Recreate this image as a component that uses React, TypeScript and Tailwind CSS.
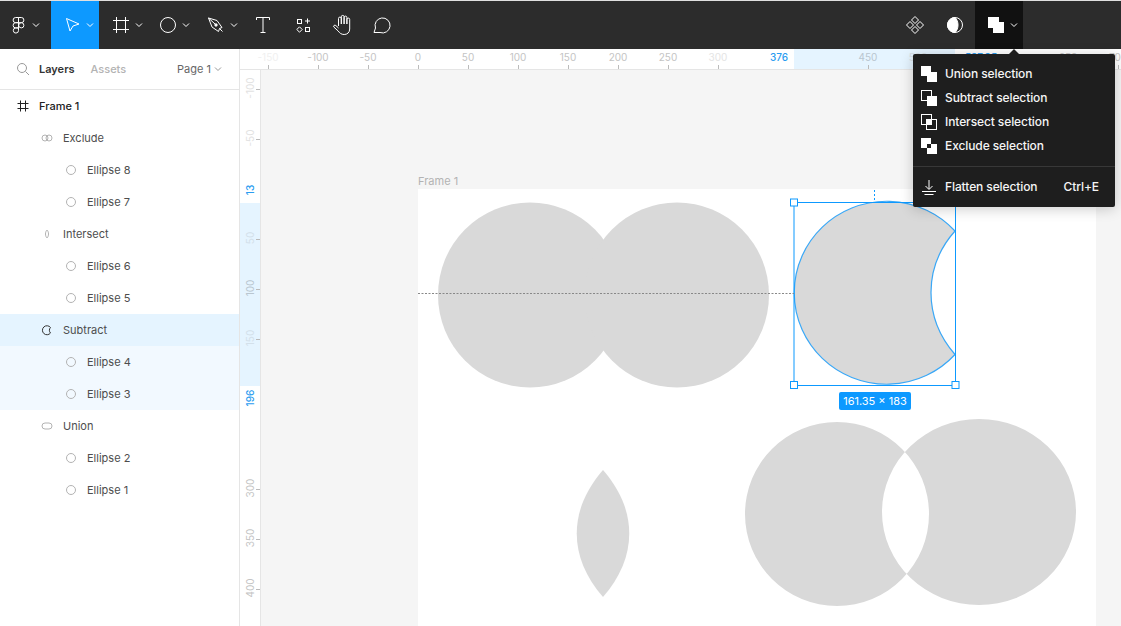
import React from "react";

const Chevron = ({ className = "text-white" }: { className?: string }) => (
  <svg width="8" height="8" viewBox="0 0 8 8" fill="none" stroke="currentColor" className={className}>
    <path d="M1 2.5 4 5.5 7 2.5" />
  </svg>
);

const Icon = ({ children }: { children: React.ReactNode }) => (
  <svg width="24" height="24" viewBox="0 0 24 24" fill="none" stroke="white" strokeWidth="1">
    {children}
  </svg>
);

const tools: { w: string; chevron?: boolean; icon: React.ReactNode }[] = [
  {
    w: "w-[51px] pl-[6px]",
    chevron: true,
    icon: (
      <>
        <path d="M12.5 4.5H9.7a2.6 2.6 0 0 0 0 5.2h2.8z" />
        <path d="M12.5 4.5h2.8a2.6 2.6 0 0 1 0 5.2h-2.8z" />
        <path d="M12.5 9.7H9.7a2.6 2.6 0 0 0 0 5.2h2.8z" />
        <circle cx="15.3" cy="12.3" r="2.6" />
        <path d="M12.5 14.9H9.7a2.6 2.6 0 1 0 2.8 2.6z" />
      </>
    ),
  },
  {
    w: "w-[48px] pl-[9px] bg-[#0d99ff]",
    chevron: true,
    icon: <path d="M6.5 5.5 19 11 13 13 10 18z" />,
  },
  {
    w: "w-[48px] pl-[10px]",
    chevron: true,
    icon: <path d="M7.5 4v16M16.5 4v16M4 7.5h16M4 16.5h16" />,
  },
  { w: "w-[48px] pl-[9px]", chevron: true, icon: <circle cx="12" cy="12" r="7.5" /> },
  {
    w: "w-[48px] pl-[9px]",
    chevron: true,
    icon: (
      <>
        <path d="M4.5 5 13 7.5 18 14.5 15.5 15.5 14.5 18.5 8 14 4.5 5z" />
        <circle cx="12" cy="12" r="1.2" fill="white" />
        <path d="M4.5 5 11 11M15.5 15.5 18.5 18.5" />
      </>
    ),
  },
  {
    w: "w-[40px] pl-[8px]",
    icon: <path d="M5.5 7V4.5h13V7M12 4.5v15M9.5 19.5h5" />,
  },
  {
    w: "w-[40px] pl-[8px]",
    icon: (
      <>
        <rect x="6.5" y="6.5" width="4" height="4" />
        <rect x="14.5" y="14.5" width="4" height="4" />
        <path d="M16.5 5.5v5M14 8h5" />
        <path d="M8.5 13.8 11.2 16.5 8.5 19.2 5.8 16.5z" />
      </>
    ),
  },
  {
    w: "w-[40px] pl-[8px]",
    icon: (
      <path d="M7.5 13V5.5a1.4 1.4 0 0 1 2.8 0V11M10.3 11V3.8a1.4 1.4 0 0 1 2.8 0V11M13.1 11V4.5a1.4 1.4 0 0 1 2.8 0V11M15.9 11V6.5a1.4 1.4 0 0 1 2.8 0V16c0 3.5-2.5 5.5-5.5 5.5-3 0-4.5-1.5-6-3.5L2.8 14c-.8-1.200.8-2.400 2-1.500L7.500 15" />
    ),
  },
  {
    w: "w-[40px] pl-[8px]",
    icon: <path d="M3 19.5 4.5 15A7.5 7.5 0 1 1 9 19.5z" />,
  },
];

type BoolKind = "union" | "subtract" | "intersect" | "exclude";

const BoolIcon = ({ kind }: { kind: BoolKind }) => {
  const bg = "#1e1e1e";
  return (
    <svg width="16" height="16" viewBox="0 0 16 16" className="shrink-0">
      {kind === "union" && <path d="M0 0h10v6h6v10H6v-6H0z" fill="white" />}
      {kind === "subtract" && (
        <>
          <rect x="0.5" y="0.5" width="10" height="10" fill="none" stroke="white" />
          <rect x="6" y="6" width="10" height="10" fill="white" />
        </>
      )}
      {kind === "intersect" && (
        <>
          <rect x="0.5" y="0.5" width="10" height="10" fill="none" stroke="white" />
          <rect x="5.5" y="5.5" width="10" height="10" fill="none" stroke="white" />
          <rect x="6" y="6" width="5" height="5" fill="white" />
        </>
      )}
      {kind === "exclude" && (
        <>
          <rect x="0" y="0" width="10" height="10" fill="white" />
          <rect x="6" y="6" width="10" height="10" fill="white" />
          <rect x="6" y="6" width="4" height="4" fill={bg} />
        </>
      )}
    </svg>
  );
};

const layers: { name: string; depth: number; kind: string; row?: string }[] = [
  { name: "Frame 1", depth: 0, kind: "frame" },
  { name: "Exclude", depth: 1, kind: "exclude" },
  { name: "Ellipse 8", depth: 2, kind: "ellipse" },
  { name: "Ellipse 7", depth: 2, kind: "ellipse" },
  { name: "Intersect", depth: 1, kind: "intersect" },
  { name: "Ellipse 6", depth: 2, kind: "ellipse" },
  { name: "Ellipse 5", depth: 2, kind: "ellipse" },
  { name: "Subtract", depth: 1, kind: "subtract", row: "bg-[#e5f4ff]" },
  { name: "Ellipse 4", depth: 2, kind: "ellipse", row: "bg-[#f2f9ff]" },
  { name: "Ellipse 3", depth: 2, kind: "ellipse", row: "bg-[#f2f9ff]" },
  { name: "Union", depth: 1, kind: "union" },
  { name: "Ellipse 2", depth: 2, kind: "ellipse" },
  { name: "Ellipse 1", depth: 2, kind: "ellipse" },
];

const LayerIcon = ({ kind }: { kind: string }) => (
  <svg width="16" height="16" viewBox="0 0 16 16" fill="none" stroke="#b3b3b3" className="shrink-0">
    {kind === "frame" && <path stroke="#222" d="M5.5 2.5v11M10.5 2.500v11M2.500 5.500h11M2.500 10.500h11" />}
    {kind === "ellipse" && <circle cx="8" cy="8" r="4.5" />}
    {kind === "exclude" && (
      <>
        <circle cx="6" cy="8" r="3" />
        <circle cx="10" cy="8" r="3" />
      </>
    )}
    {kind === "intersect" && <path d="M8 4c2 1.8 2 6.2 0 8-2-1.8-2-6.2 0-8z" />}
    {kind === "subtract" && (
      <path stroke="#333" d="M11.5 5.5A4.5 4.5 0 1 0 11.5 11C10 9.5 10 7 11.5 5.5z" />
    )}
    {kind === "union" && <rect x="3" y="5" width="10" height="6" rx="3" />}
  </svg>
);

const hLabels: [string, number, string][] = [
  ["-150", 268, "text-[#f0f0f0]"],
  ["-100", 318, "text-[#c4c4c4]"],
  ["-50", 368, "text-[#c4c4c4]"],
  ["0", 418, "text-[#c4c4c4]"],
  ["50", 468, "text-[#c4c4c4]"],
  ["100", 518, "text-[#c4c4c4]"],
  ["150", 568, "text-[#c4c4c4]"],
  ["200", 618, "text-[#c4c4c4]"],
  ["250", 668, "text-[#c4c4c4]"],
  ["300", 718, "text-[#e4e4e4]"],
  ["376", 779, "text-[#2a9cf0] font-medium"],
  ["450", 868, "text-[#b9c6d0]"],
  ["500", 918, "text-[#d5dee5]"],
  ["537.35", 981, "text-[#2a9cf0] font-medium"],
  ["650", 1068, "text-[#c4c4c4]"],
  ["700", 1118, "text-[#c4c4c4]"],
];
const hTicks = [268, 318, 368, 418, 468, 518, 568, 618, 668, 718, 868, 1068, 1118];

const vLabels: [string, number, string][] = [
  ["-100", 88, "text-[#e2e2e2]"],
  ["-50", 138, "text-[#e2e2e2]"],
  ["13", 190, "text-[#2a9cf0] font-medium"],
  ["50", 238, "text-[#d3e0ea]"],
  ["100", 288, "text-[#b9c6d0]"],
  ["150", 338, "text-[#d3e0ea]"],
  ["196", 398, "text-[#2a9cf0] font-medium"],
  ["300", 488, "text-[#c4c4c4]"],
  ["350", 538, "text-[#c4c4c4]"],
  ["400", 588, "text-[#c4c4c4]"],
];
const vTicks = [89, 139, 239, 289, 339, 489, 539, 589];

// canvas drawing uses page coordinates through the viewBox
const CanvasDrawing = () => (
  <svg width="860" height="556" viewBox="261 70 860 556" className="absolute left-0 top-0">
    <ellipse cx="530" cy="295" rx="92" ry="92.5" fill="#d9d9d9" />
    <ellipse cx="677" cy="295" rx="92" ry="92.5" fill="#d9d9d9" />
    <path d="M603 470C638 510 638 557 603 597C568 557 568 510 603 470Z" fill="#d9d9d9" />
    <path
      fillRule="evenodd"
      fill="#d9d9d9"
      d="M745 514a92 92 0 1 0 184 0a92 92 0 1 0-184 0ZM882 512a97 93 0 1 0 194 0a97 93 0 1 0-194 0Z"
    />
    <path
      d="M955 231A92.5 91.5 0 1 0 955 354.5C923 318 923 267 955 231Z"
      fill="#d9d9d9"
      stroke="#3aa8f7"
      strokeWidth="1.2"
    />
    <rect x="794" y="202.5" width="161.5" height="183" fill="none" stroke="#0d99ff" />
    <path d="M418 293.5H794" stroke="#888" strokeDasharray="2 1.5" />
    <path d="M874.5 190V202" stroke="#0d99ff" strokeDasharray="2 2" />
    {[
      [794, 202.5],
      [955.5, 202.5],
      [794, 385],
      [955.5, 385],
    ].map(([x, y]) => (
      <rect key={`${x}-${y}`} x={x - 3.5} y={y - 3.5} width="7" height="7" fill="white" stroke="#0d99ff" />
    ))}
  </svg>
);

const menuItems: { label: string; kind: BoolKind }[] = [
  { label: "Union selection", kind: "union" },
  { label: "Subtract selection", kind: "subtract" },
  { label: "Intersect selection", kind: "intersect" },
  { label: "Exclude selection", kind: "exclude" },
];

export default function App() {
  return (
    <div className="relative h-screen w-screen overflow-hidden border-t border-[#e0e0e0] bg-white font-['Inter',sans-serif] text-[11px]">
      {/* toolbar */}
      <div className="flex h-[48px] items-stretch bg-[#2c2c2c]">
        {tools.map((t, i) => (
          <div key={i} className={`flex items-center gap-[2px] ${t.w}`}>
            <Icon>{t.icon}</Icon>
            {t.chevron && <Chevron />}
          </div>
        ))}
        <div className="ml-auto flex w-[40px] items-center pl-[8px]">
          <Icon>
            <path d="M12 3.5 15.5 7 12 10.5 8.5 7zM12 13.5 15.5 17 12 20.5 8.5 17zM7 8.5 10.5 12 7 15.5 3.5 12zM17 8.5 20.5 12 17 15.5 13.5 12z" />
          </Icon>
        </div>
        <div className="flex w-[40px] items-center pl-[8px]">
          <Icon>
            <circle cx="12" cy="12" r="7.5" />
            <path d="M12 4.5a7.5 7.5 0 0 0 0 15c2-2 3-4.5 3-7.5s-1-5.5-3-7.5z" fill="white" />
          </Icon>
        </div>
        <div className="mr-[98px] flex w-[48px] items-center gap-[2px] bg-[#111111] pl-[9px]">
          <svg width="24" height="24" viewBox="0 0 24 24">
            <path d="M4 4h11v5h5v11H9v-5H4z" fill="white" />
          </svg>
          <Chevron />
        </div>
      </div>

      <div className="flex h-[577px]">
        {/* layers panel */}
        <div className="w-[240px] shrink-0 border-r border-[#e5e5e5] bg-white">
          <div className="flex h-[41px] items-center border-b border-[#e5e5e5] pl-[16px] pr-[17px]">
            <svg width="14" height="14" viewBox="0 0 14 14" fill="none" stroke="#999" className="mr-[9px]">
              <circle cx="6" cy="6" r="4.5" />
              <path d="M9.5 9.5 13 13" />
            </svg>
            <span className="font-semibold text-[#333]">Layers</span>
            <span className="ml-[16px] font-medium text-[#b3b3b3]">Assets</span>
            <span className="ml-auto text-[#666]">Page 1</span>
            <Chevron className="ml-[3px] text-[#999]" />
          </div>
          {layers.map((l) => (
            <div
              key={l.name}
              className={`flex h-[32px] items-center gap-[8px] ${l.row ?? ""} ${
                l.depth === 0 ? "pl-[15px] font-medium text-[#222]" : l.depth === 1 ? "pl-[39px] text-[#4d4d4d]" : "pl-[63px] text-[#4d4d4d]"
              }`}
            >
              <LayerIcon kind={l.kind} />
              <span>{l.name}</span>
            </div>
          ))}
        </div>

        {/* rulers and canvas */}
        <div className="flex min-w-0 flex-1 flex-col">
          <div className="relative h-[21px] shrink-0 border-b border-[#e5e5e5] bg-white">
            <div className="absolute left-[554px] top-0 h-[20px] w-[161px] bg-[#e5f4ff]" />
            {hTicks.map((x) => (
              <div key={x} className="absolute top-[16px] h-[4px] w-px bg-[#bbb]" style={{ left: x - 240 }} />
            ))}
            {hLabels.map(([t, x, c]) => (
              <span key={t} className={`absolute top-[2px] w-[50px] text-center text-[10px] leading-[12px] ${c}`} style={{ left: x - 265 }}>
                {t}
              </span>
            ))}
          </div>
          <div className="flex min-h-0 flex-1">
            <div className="relative w-[21px] shrink-0 border-r border-[#e5e5e5] bg-white">
              <div className="absolute left-0 top-[133px] h-[183px] w-[20px] bg-[#e5f4ff]" />
              {vTicks.map((y) => (
                <div key={y} className="absolute left-[16px] h-px w-[4px] bg-[#bbb]" style={{ top: y - 70 }} />
              ))}
              {vLabels.map(([t, y, c]) => (
                <span
                  key={t}
                  className={`absolute left-[-15px] w-[50px] -rotate-90 text-center text-[10px] leading-[12px] ${c}`}
                  style={{ top: y - 76 }}
                >
                  {t}
                </span>
              ))}
            </div>
            <div className="relative flex-1 overflow-hidden bg-[#f5f5f5]">
              <div className="absolute left-[157px] top-[119px] h-[437px] w-[678px] bg-white" />
              <span className="absolute left-[157px] top-[103px] text-[11px] text-[#b3b3b3]">Frame 1</span>
              <CanvasDrawing />
              <div className="absolute left-[578px] top-[322px] flex h-[18px] w-[72px] items-center justify-center rounded-[2px] bg-[#0d99ff] text-[11px] text-white">
                161.35 × 183
              </div>
            </div>
          </div>
        </div>
      </div>

      {/* boolean dropdown */}
      <div className="absolute left-[913px] top-[53px] w-[202px] rounded-[2px] bg-[#1e1e1e] pb-[8px] pt-[8px] text-[12px] font-medium tracking-[-0.1px] text-[#f5f5f5] shadow-[0_2px_14px_rgba(0,0,0,0.2)]">
        <div className="absolute left-[96px] top-[-5px] h-0 w-0 border-x-[5px] border-b-[5px] border-x-transparent border-b-[#1e1e1e]" />
        {menuItems.map((m) => (
          <div key={m.label} className="flex h-[24px] items-center gap-[8px] pl-[8px]">
            <BoolIcon kind={m.kind} />
            <span>{m.label}</span>
          </div>
        ))}
        <div className="mb-[8px] mt-[8px] h-px bg-[#383838]" />
        <div className="flex h-[24px] items-center gap-[8px] pl-[8px] pr-[16px]">
          <svg width="16" height="16" viewBox="0 0 16 16" fill="none" stroke="white" className="shrink-0">
            <path d="M8 1v9M4.5 7 8 10.5 11.5 7M1 12.5h14M3.5 15.5h9" />
          </svg>
          <span>Flatten selection</span>
          <span className="ml-auto">Ctrl+E</span>
        </div>
      </div>
    </div>
  );
}
